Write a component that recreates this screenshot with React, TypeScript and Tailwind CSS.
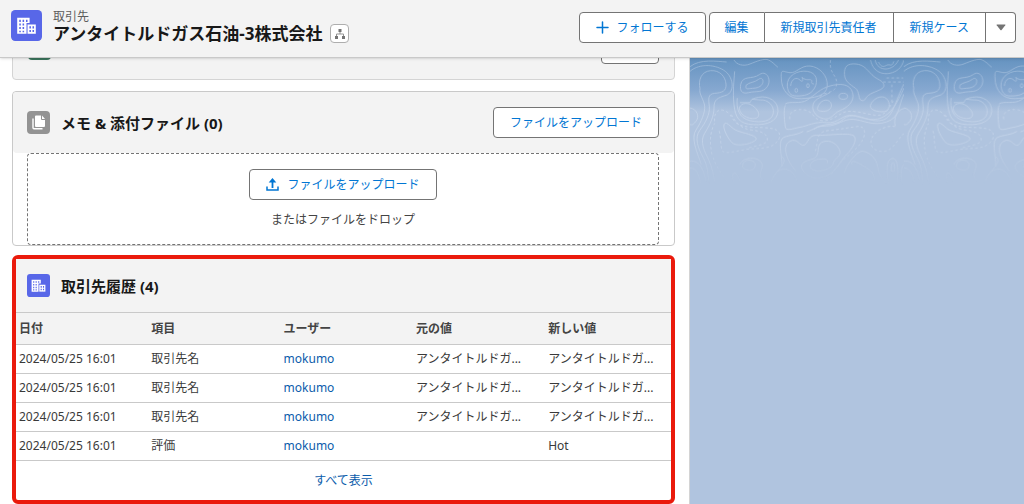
import type { ReactNode } from "react"

const history = [
  { id: 1, date: "2024/05/25 16:01", field: "取引先名", user: "mokumo", oldValue: "アンタイトルドガ...", newValue: "アンタイトルドガ..." },
  { id: 2, date: "2024/05/25 16:01", field: "取引先名", user: "mokumo", oldValue: "アンタイトルドガ...", newValue: "アンタイトルドガ..." },
  { id: 3, date: "2024/05/25 16:01", field: "取引先名", user: "mokumo", oldValue: "アンタイトルドガ...", newValue: "アンタイトルドガ..." },
  { id: 4, date: "2024/05/25 16:01", field: "評価", user: "mokumo", oldValue: "", newValue: "Hot" },
]

const columns = ["日付", "項目", "ユーザー", "元の値", "新しい値"]

const AccountIcon = ({ className }: { className: string }) => (
  <svg viewBox="0 0 30 30" className={className} aria-hidden="true">
    <rect width="30" height="30" rx="4" fill="#5867e8" />
    <path d="M6 7.500h12v5h-3v10.500H6z" fill="#fff" />
    <path d="M16 14h8v9h-8z" fill="#fff" />
    <g fill="#5867e8">
      <path d="M8 9.500h1.500v2H8zM11.200 9.500h1.500v2h-1.500zM14.500 9.500H16v2h-1.500zM8 13h1.500v2H8zM11.200 13h1.500v2h-1.500zM8 16.500h1.500v2H8zM11.200 16.500h1.500v2h-1.500zM8 20h1.500v1.500H8zM11.200 20h1.500v1.500h-1.500z" />
      <path d="M17.800 15.800h1.500v2h-1.500zM20.800 15.800h1.500v2h-1.500zM17.800 19.300h1.500v2h-1.500zM20.800 19.300h1.500v2h-1.500z" />
    </g>
  </svg>
)

const FilesIcon = () => (
  <svg viewBox="0 0 23 23" className="size-[23px] shrink-0" aria-hidden="true">
    <rect width="23" height="23" rx="4" fill="#939393" />
    <path d="M9 4.500h5v3.500a1 1 0 0 0 1 1h3V15a1 1 0 0 1-1 1H9a1 1 0 0 1-1-1V5.500a1 1 0 0 1 1-1z" fill="#fff" />
    <path d="M15 4.500L18 8h-3z" fill="#fff" />
    <path d="M6 7.500v9.200a1 1 0 0 0 1 1h8.500" fill="none" stroke="#fff" strokeWidth="1.400" />
  </svg>
)

const Button = ({ children, className = "px-4" }: { children: ReactNode; className?: string }) => (
  <button
    type="button"
    className={`flex h-[31px] items-center justify-center rounded border border-[#747474] bg-white text-xs text-[#0176d3] ${className}`}
  >
    {children}
  </button>
)

const Header = () => (
  <header className="relative z-10 flex items-start justify-between border-b border-[#c9c9c9] bg-[#f3f3f3] pt-[10px] pr-2 pb-[14px] pl-[11px] shadow-sm">
    <div className="flex min-w-0 gap-[11px]">
      <AccountIcon className="size-[31px] shrink-0" />
      <div>
        <p className="text-xs leading-[14px] text-[#5c5c5c]">取引先</p>
        <div className="flex items-center gap-2">
          <h1 className="text-[17px] leading-4 font-bold text-[#181818]">アンタイトルドガス石油-3株式会社</h1>
          <button
            type="button"
            aria-label="取引先階層を表示"
            className="flex size-[19px] items-center justify-center rounded border border-[#aeaeae] bg-white"
          >
            <svg viewBox="0 0 12 12" className="size-3" aria-hidden="true">
              <path d="M6 4v2M2.500 8V6h7v2" fill="none" stroke="#939393" />
              <path d="M4.500 1h3v3h-3zM1 8h3v3H1zM8 8h3v3H8z" fill="#747474" />
            </svg>
          </button>
        </div>
      </div>
    </div>

    <div className="flex shrink-0 gap-[3px] pt-[2px]">
      <Button className="gap-2 px-4">
        <svg viewBox="0 0 13 13" className="size-[13px]" aria-hidden="true">
          <path d="M6.500 1v11M1 6.500h11" stroke="#0176d3" strokeWidth="1.500" strokeLinecap="round" />
        </svg>
        フォローする
      </Button>
      <div className="flex">
        <Button className="w-14 rounded-r-none">編集</Button>
        <Button className="rounded-none border-l-0 px-4">新規取引先責任者</Button>
        <Button className="rounded-none border-l-0 px-4">新規ケース</Button>
        <button
          type="button"
          aria-label="その他のアクション"
          className="flex h-[31px] w-[30px] items-center justify-center rounded-r border border-l-0 border-[#747474] bg-white"
        >
          <svg viewBox="0 0 10 7" className="h-[7px] w-[10px]" aria-hidden="true">
            <path d="M1 .5h8q.8 0 .3.700L5.600 6q-.6.600-1.200 0L.7 1.200Q.2.500 1 .5z" fill="#747474" />
          </svg>
        </button>
      </div>
    </div>
  </header>
)

// previous related list, mostly scrolled under the header
const ScrolledCard = () => (
  <section className="flex items-center justify-between rounded border border-[#d4d4d4] bg-[#f3f3f3] p-[15px]">
    <span className="size-[23px] rounded bg-[#3b755c]" />
    <button type="button" aria-label="新規" className="h-[31px] w-[58px] rounded border border-[#747474] bg-white" />
  </section>
)

const FilesCard = () => (
  <section className="mt-[11px] rounded border border-[#c9c9c9] bg-white">
    <div className="flex items-center justify-between rounded bg-[#f3f3f3] py-[15px] pr-[15px] pl-[14px]">
      <div className="flex items-center gap-[11px]">
        <FilesIcon />
        <h2 className="text-[15px] leading-5 font-bold text-[#181818]">メモ &amp; 添付ファイル (0)</h2>
      </div>
      <Button>ファイルをアップロード</Button>
    </div>
    <div className="mr-[15px] ml-[14px] flex flex-col items-center gap-3 rounded border border-dashed border-[#747474] pt-[15px] pb-4">
      <Button className="gap-2 px-4">
        <svg viewBox="0 0 13 13" className="size-[13px]" aria-hidden="true">
          <path d="M1 8.500V12h11V8.500" fill="none" stroke="#0176d3" strokeWidth="1.500" />
          <path d="M6.500 10V2.500" stroke="#0176d3" strokeWidth="1.800" />
          <path d="M6.500 0l3.800 4.500H2.700z" fill="#0176d3" />
        </svg>
        ファイルをアップロード
      </Button>
      <p className="text-xs leading-4 text-[#444444]">またはファイルをドロップ</p>
    </div>
  </section>
)

const HistoryCard = () => (
  <section className="mt-[9px] rounded-md border-4 border-[#ea1a0c] bg-white">
    <div className="flex items-center gap-[11px] bg-[#f3f3f3] px-[11px] py-[15px]">
      <AccountIcon className="size-[23px] shrink-0" />
      <h2 className="text-[15px] leading-5 font-bold text-[#181818]">取引先履歴 (4)</h2>
    </div>
    <table className="w-full table-fixed border-collapse text-left text-xs text-[#3a3a3a]">
      <thead>
        <tr className="h-8 border-y border-[#c9c9c9] bg-[#f3f3f3]">
          {columns.map((column) => (
            <th key={column} className="w-[20.2%] px-[3px] font-bold text-[#444444] last:w-auto">
              {column}
            </th>
          ))}
        </tr>
      </thead>
      <tbody>
        {history.map((row) => (
          <tr key={row.id} className="h-[29px] border-b border-[#c9c9c9]">
            <td className="px-[3px] whitespace-nowrap">{row.date}</td>
            <td className="px-[3px]">{row.field}</td>
            <td className="px-[3px]">
              <a href="#" className="text-[#0b5cab]">{row.user}</a>
            </td>
            <td className="px-[3px] whitespace-nowrap">{row.oldValue}</td>
            <td className="px-[3px] whitespace-nowrap">{row.newValue}</td>
          </tr>
        ))}
      </tbody>
    </table>
    <a href="#" className="flex h-[39px] items-center justify-center text-xs text-[#0b5cab]">
      すべて表示
    </a>
  </section>
)

const Backdrop = () => (
  <svg className="h-32 w-full" aria-hidden="true">
    <defs>
      <linearGradient id="sky" x1="0" y1="0" x2="0" y2="1">
        <stop offset="0" stopColor="#6593c0" />
        <stop offset="0.250" stopColor="#86a8d0" />
        <stop offset="0.420" stopColor="#b0c4df" />
      </linearGradient>
      <linearGradient id="fade" x1="0" y1="0" x2="0" y2="1">
        <stop offset="0" stopColor="#fff" stopOpacity="0.350" />
        <stop offset="0.600" stopColor="#fff" stopOpacity="0.450" />
        <stop offset="1" stopColor="#fff" stopOpacity="0" />
      </linearGradient>
      <mask id="fadeMask">
        <rect width="100%" height="100%" fill="url(#fade)" />
      </mask>
      <pattern id="contours" y="6" width="642" height="380" patternUnits="userSpaceOnUse" patternTransform="scale(0.333) translate(0 -6)">
        <g fill="none" stroke="#dce6f5" strokeWidth="2.800">
          <path d="M0 40C30 14 80 20 106 40S134 104 108 112S72 124 72 150S60 200 44 226S44 280 56 306S70 350 76 380" />
          <path d="M30 92C24 66 34 40 62 38S106 56 108 78S96 104 74 106S56 124 58 146S48 192 30 216S24 270 40 300S52 350 58 380" />
          <path d="M30 92C26 108 42 126 44 144S34 192 18 216S20 280 34 320" />
          <path d="M0 26C30 2 80 10 110 12M132 6C140 20 160 26 180 18S224 0 236 6S250 16 264 28" />
          <path d="M152 80C158 50 186 66 208 50S246 66 232 86S200 98 176 104S150 94 152 80zM168 82C178 72 194 74 206 64S224 72 214 82S190 90 178 92S168 90 168 82z" />
          <path d="M134 40C132 70 128 100 132 140S148 198 190 200S262 190 264 160S236 112 206 118S186 128 180 134H150" />
          <path d="M142 120C138 150 146 180 180 188S246 190 250 166S232 124 212 126L186 124M148 150C154 132 178 134 192 146S212 174 200 180S150 178 148 150z" />
          <path d="M274 60C272 30 280 42 300 44S332 22 360 24S414 52 412 84S370 120 334 122S274 98 274 60zM292 84C290 52 324 36 352 40S386 68 374 90S340 114 320 114S294 102 292 84z" />
          <path d="M302 84C304 62 320 56 330 66S340 64 336 58C350 70 358 62 364 66S358 76 372 78" />
          <ellipse cx="319" cy="97" rx="4" ry="6" />
          <ellipse cx="354" cy="83" rx="4" ry="6" />
          <path d="M286 142C280 160 284 190 286 206S306 212 330 208S374 190 410 194S456 168 490 172S550 196 580 186S616 130 642 78" />
          <path d="M286 138C300 128 330 140 352 126S390 92 420 84S480 76 488 104S470 150 450 158S424 188 400 182S364 156 370 138S400 116 420 104" />
          <path d="M386 142C396 122 420 122 424 138S410 162 396 160S380 156 386 142z" />
          <ellipse cx="460" cy="115" rx="13" ry="9" />
          <path d="M464 50C462 24 474 16 498 18S530 34 546 50S578 66 582 80S560 98 542 108S528 130 516 128S510 100 496 90S464 70 464 50z" />
          <path d="M542 142C546 124 576 108 590 122S598 156 588 160S536 160 542 142z" />
          <path d="M542 6C550 44 580 50 600 46S636 30 642 6M556 6C562 42 610 42 626 6M566 12C572 26 580 28 590 22S606 30 612 10" />
          <path d="M350 222C376 214 376 204 410 204S460 182 490 184S550 206 590 192S624 150 642 108M372 214C400 192 436 206 460 184S510 182 540 184S604 182 642 90" />
          <path d="M616 204C610 180 624 154 642 152M0 150C20 152 30 176 18 190S6 200 0 200" />
          <path d="M102 200C106 188 118 202 130 212S174 226 190 234S198 248 184 254S138 266 126 254S98 212 102 200z" />
          <path d="M276 326C276 290 262 246 282 238S320 232 340 220M276 296C300 316 252 336 242 380" />
          <path d="M318 340C284 300 278 262 300 250S330 266 342 262S356 230 380 232S480 222 492 234S486 274 470 290S450 320 430 340S370 370 346 346S340 310 366 304S380 270 390 258S430 244 446 270S432 300 430 316S390 346 370 336S366 306 386 304S416 302 412 316" />
          <path d="M150 320C160 290 226 296 216 330S210 350 226 380M132 380C120 330 140 340 150 370M158 322C160 300 196 304 196 320S184 338 174 336S156 330 158 322z" />
          <path d="M464 346C464 330 500 276 520 280S560 300 564 330S580 360 590 380M486 320C480 300 508 316 530 330S550 350 556 370M596 380C590 340 588 306 606 302S626 330 622 380M604 340C602 310 616 300 614 340zM636 380C630 330 640 320 642 320" />
          <path d="M0 310C26 306 40 330 48 370M0 330C20 330 26 350 32 376M244 370C260 320 312 320 324 380" />
          <g strokeDasharray="8 7">
            <path d="M74 190C70 150 100 150 116 166S128 196 160 204S250 204 264 220S262 258 240 266S190 270 160 276S106 288 98 280S94 220 84 214" />
            <path d="M66 290C56 240 64 216 74 196M124 170C136 190 150 212 184 216S234 230 232 246S190 264 170 272M110 370C90 340 76 320 70 300" />
            <path d="M300 184C296 160 316 152 344 156S370 186 396 188S436 176 460 164S530 170 560 172S596 150 610 130M376 280C386 250 376 222 414 218S470 210 500 206S528 230 516 250S480 290 462 304S430 350 404 368" />
            <path d="M616 206C590 200 550 220 544 246S564 284 586 280S620 250 642 226M422 6C416 50 444 50 440 80S400 100 390 116M580 72H642M590 60H640M606 80V140" />
          </g>
        </g>
      </pattern>
    </defs>
    <rect width="100%" height="100%" fill="url(#sky)" />
    <rect width="100%" height="100%" fill="url(#contours)" mask="url(#fadeMask)" />
  </svg>
)

const App = () => {
  return (
    <div className="flex min-h-screen flex-col bg-white font-['Noto_Sans','Noto_Sans_CJK_JP',sans-serif]">
      <Header />
      <div className="grid flex-1 grid-cols-[minmax(0,690fr)_minmax(0,334fr)]">
        <main className="-mt-[41px] border-r border-[#d4d4d4] pr-[14px] pb-px pl-3">
          <ScrolledCard />
          <FilesCard />
          <HistoryCard />
        </main>
        <aside className="bg-[#b0c4df]">
          <Backdrop />
        </aside>
      </div>
    </div>
  )
}

export default App
